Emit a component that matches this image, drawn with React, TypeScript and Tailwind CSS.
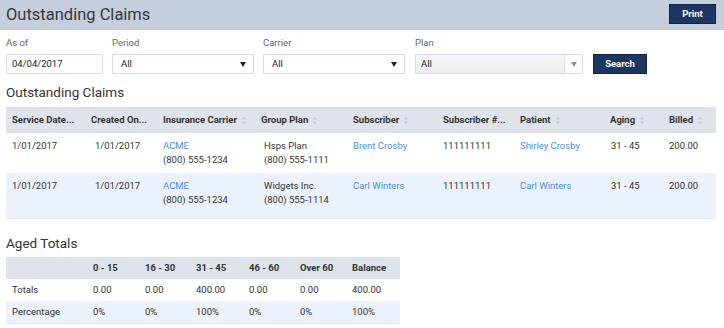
import React from "react";

/* ── sample data ── */
const CLAIMS = [
  {
    service: "1/01/2017",
    created: "1/01/2017",
    carrier: "ACME",
    carrierPhone: "(800) 555-1234",
    plan: "Hsps Plan",
    planPhone: "(800) 555-1111",
    subscriber: "Brent Crosby",
    subscriberNo: "111111111",
    patient: "Shirley Crosby",
    aging: "31 - 45",
    billed: "200.00",
  },
  {
    service: "1/01/2017",
    created: "1/01/2017",
    carrier: "ACME",
    carrierPhone: "(800) 555-1234",
    plan: "Widgets Inc.",
    planPhone: "(800) 555-1114",
    subscriber: "Carl Winters",
    subscriberNo: "111111111",
    patient: "Carl Winters",
    aging: "31 - 45",
    billed: "200.00",
  },
];

const AGED_COLS = ["0 - 15", "16 - 30", "31 - 45", "46 - 60", "Over 60", "Balance"];
const AGED_ROWS = [
  { label: "Totals", values: ["0.00", "0.00", "400.00", "0.00", "0.00", "400.00"] },
  { label: "Percentage", values: ["0%", "0%", "100%", "0%", "0%", "100%"] },
];

function SortIcon() {
  return (
    <svg width="6" height="9" viewBox="0 0 6 9" className="ml-[4px] inline-block align-middle">
      <path d="M3 0.5 L5.6 3.6 H0.4 Z" fill="#c3cad4" />
      <path d="M3 8.5 L5.6 5.4 H0.4 Z" fill="#c3cad4" />
    </svg>
  );
}

function Caret({ color = "#222" }: { color?: string }) {
  return (
    <svg width="6" height="5" viewBox="0 0 6 5">
      <path d="M0 0 H6 L3 5 Z" fill={color} />
    </svg>
  );
}

function Field({ label, width, children }: { label: string; width: string; children: React.ReactNode }) {
  return (
    <div className={`flex flex-col ${width}`}>
      <label className="text-[9.5px] text-[#666] leading-[14px] mb-[4px]">{label}</label>
      {children}
    </div>
  );
}

function SelectBox({ value }: { value: string }) {
  return (
    <div className="h-[20px] border border-[#d6dce6] bg-white flex items-center justify-between pl-[8px] pr-[7px] text-[9.5px] text-[#222]">
      <span>{value}</span>
      <Caret />
    </div>
  );
}

const COLS = [
  { label: "Service Date...", w: "w-[79px]", sort: false },
  { label: "Created On...", w: "w-[72px]", sort: false },
  { label: "Insurance Carrier", w: "w-[98px]", sort: true },
  { label: "Group Plan", w: "w-[92px]", sort: true },
  { label: "Subscriber", w: "w-[90px]", sort: true },
  { label: "Subscriber #...", w: "w-[77px]", sort: false },
  { label: "Patient", w: "w-[90px]", sort: true },
  { label: "Aging", w: "w-[59px]", sort: true },
  { label: "Billed", w: "w-[53px]", sort: true },
];

const AGED_W = ["w-[81px]", "w-[52px]", "w-[51px]", "w-[53px]", "w-[51px]", "w-[52px]", "w-[54px]"];

export default function App() {
  return (
    <div className="w-[724px] h-[328px] overflow-hidden bg-white text-[#333] font-['Roboto',_'Liberation_Sans',_sans-serif]">
      <header className="h-[30px] bg-[#c5cedd] flex items-center justify-between pl-[6px] pr-[8px]">
        <h1 className="text-[16.5px] leading-[22px] text-[#383838] font-normal">Outstanding Claims</h1>
        <button className="h-[20px] w-[47px] mt-[-2px] bg-[#1d3562] text-white text-[9.5px] font-bold border border-[#0f2347]">
          Print
        </button>
      </header>

      <div className="flex items-end gap-[9px] pl-[6px] pt-[6px]">
        <Field label="As of" width="w-[97px]">
          <div className="h-[20px] border border-[#d6dce6] pl-[5px] flex items-center text-[9.5px] text-[#222]">04/04/2017</div>
        </Field>
        <Field label="Period" width="w-[142px]">
          <SelectBox value="All" />
        </Field>
        <Field label="Carrier" width="w-[142px]">
          <SelectBox value="All" />
        </Field>
        <Field label="Plan" width="w-[168px] ml-[1px]">
          <div className="h-[20px] border border-[#d6dce6] bg-gradient-to-b from-[#f8f8f8] to-[#eeeeee] flex items-center text-[9.5px] text-[#222]">
            <span className="flex-1 pl-[5px]">All</span>
            <span className="h-full w-[18px] border-l border-[#e2e2e2] bg-white flex items-center justify-center">
              <Caret color="#7d94b5" />
            </span>
          </div>
        </Field>
        <button className="h-[20px] w-[54px] ml-[1px] bg-[#1d3562] text-white text-[9.5px] font-bold border border-[#0f2347]">
          Search
        </button>
      </div>

      <h2 className="pl-[6px] mt-[9px] text-[13.5px] leading-[18px] text-[#333]">Outstanding Claims</h2>

      <div className="ml-[6px] mt-[6px] w-[710px] border-b border-[#e3e8ef]">
        <table className="w-full border-collapse table-fixed text-[9.5px]">
          <thead>
            <tr className="bg-[#dfe4ec] h-[26px]">
              {COLS.map((c) => (
                <th key={c.label} className={`${c.w} text-left font-bold text-[#333] pl-[6px] pr-0 whitespace-nowrap`}>
                  {c.label}
                  {c.sort && <SortIcon />}
                </th>
              ))}
            </tr>
          </thead>
          <tbody>
            {CLAIMS.map((r, i) => (
              <tr
                key={i}
                className={`${i % 2 === 0 ? "bg-white h-[40px]" : "bg-[#ebf2fc] h-[45px]"} align-top leading-[14px]`}
              >
                <td className="pl-[6px] pt-[6px]">{r.service}</td>
                <td className="pl-[10px] pt-[6px]">{r.created}</td>
                <td className="pl-[6px] pt-[6px]">
                  <div className="text-[#4a8fe2]">{r.carrier}</div>
                  <div>{r.carrierPhone}</div>
                </td>
                <td className="pl-[9px] pt-[6px]">
                  <div>{r.plan}</div>
                  <div>{r.planPhone}</div>
                </td>
                <td className="pl-[6px] pt-[6px] text-[#4a8fe2]">{r.subscriber}</td>
                <td className="pl-[6px] pt-[6px]">{r.subscriberNo}</td>
                <td className="pl-[6px] pt-[6px] text-[#4a8fe2]">{r.patient}</td>
                <td className="pl-[7px] pt-[6px]">{r.aging}</td>
                <td className="pl-[6px] pt-[6px]">{r.billed}</td>
              </tr>
            ))}
          </tbody>
        </table>
      </div>

      <h2 className="pl-[6px] mt-[15px] text-[13.5px] leading-[18px] text-[#333]">Aged Totals</h2>

      <div className="ml-[6px] mt-[5px] w-[394px] border-b border-[#e3e8ef]">
        <table className="w-full border-collapse table-fixed text-[9.5px]">
          <thead>
            <tr className="bg-[#dfe4ec] h-[22px]">
              <th className={`${AGED_W[0]}`} />
              {AGED_COLS.map((c, i) => (
                <th key={c} className={`${AGED_W[i + 1]} text-left font-bold pl-[6px]`}>
                  {c}
                </th>
              ))}
            </tr>
          </thead>
          <tbody>
            {AGED_ROWS.map((r, i) => (
              <tr key={r.label} className={`${i % 2 === 0 ? "bg-white" : "bg-[#ebf2fc]"} h-[22px]`}>
                <td className="pl-[6px]">{r.label}</td>
                {r.values.map((v, j) => (
                  <td key={j} className="pl-[6px]">
                    {v}
                  </td>
                ))}
              </tr>
            ))}
          </tbody>
        </table>
      </div>
    </div>
  );
}
